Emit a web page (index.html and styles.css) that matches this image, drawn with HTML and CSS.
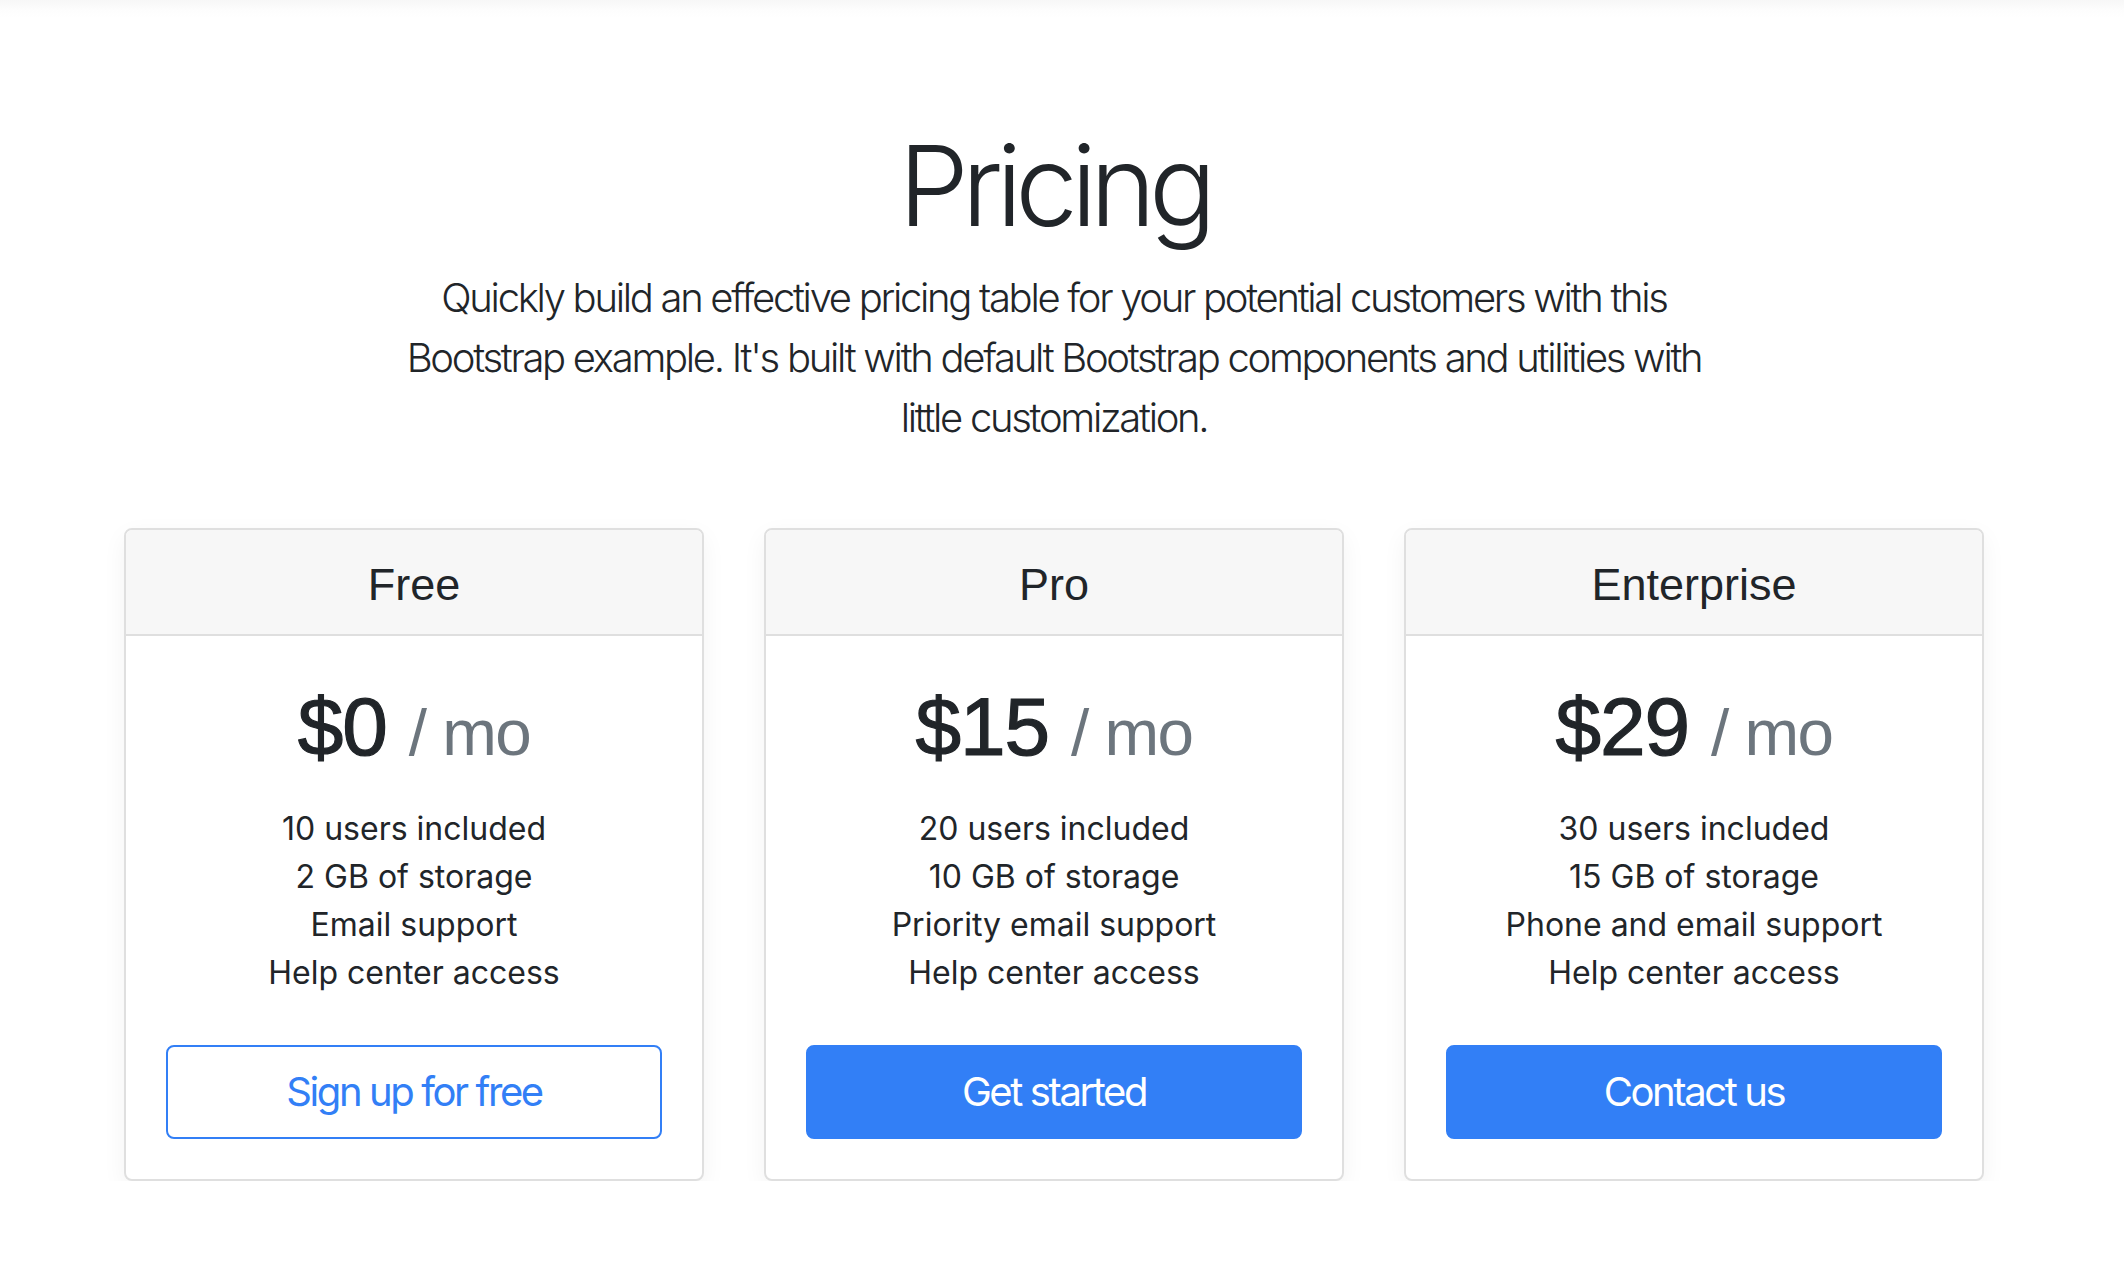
FILE: index.html
```html
<!DOCTYPE html>
<html lang="en">
<head>
<meta charset="utf-8">
<title>Pricing example</title>
<link rel="stylesheet" href="styles.css">
</head>
<body>
<div class="page">
  <header class="pricing-header">
    <h1 class="display">Pricing</h1>
    <p class="lead">Quickly build an effective pricing table for your potential customers with this Bootstrap example. It's built with default Bootstrap components and utilities with little customization.</p>
  </header>
  <main class="container">
    <div class="card-deck">
      <section class="card">
        <div class="card-header"><h4 class="plan-name">Free</h4></div>
        <div class="card-body">
          <h1 class="price">$0 <small class="muted">/ mo</small></h1>
          <ul class="features">
            <li>10 users included</li>
            <li>2 GB of storage</li>
            <li>Email support</li>
            <li>Help center access</li>
          </ul>
          <button type="button" class="btn btn-outline">Sign up for free</button>
        </div>
      </section>
      <section class="card">
        <div class="card-header"><h4 class="plan-name">Pro</h4></div>
        <div class="card-body">
          <h1 class="price">$15 <small class="muted">/ mo</small></h1>
          <ul class="features">
            <li>20 users included</li>
            <li>10 GB of storage</li>
            <li>Priority email support</li>
            <li>Help center access</li>
          </ul>
          <button type="button" class="btn btn-primary">Get started</button>
        </div>
      </section>
      <section class="card">
        <div class="card-header"><h4 class="plan-name">Enterprise</h4></div>
        <div class="card-body">
          <h1 class="price">$29 <small class="muted">/ mo</small></h1>
          <ul class="features">
            <li>30 users included</li>
            <li>15 GB of storage</li>
            <li>Phone and email support</li>
            <li>Help center access</li>
          </ul>
          <button type="button" class="btn btn-primary">Contact us</button>
        </div>
      </section>
    </div>
  </main>
</div>
</body>
</html>
```

FILE: styles.css
```css
html, body {
  margin: 0;
  padding: 0;
}

body {
  background: #fff linear-gradient(to bottom, #f7f7f7 0, #fdfdfd 10px, #fff 18px) no-repeat;
  color: #212529;
  font-family: Inter, "Noto Sans", sans-serif;
  font-size: 32px;
  line-height: 1.5;
}

.page {
  width: 2108px;
}

.pricing-header {
  max-width: 1336px;
  margin: 0 auto;
  padding: 118px 32px 48px;
  text-align: center;
}

.display {
  margin: 0 0 16px;
  font-size: 112px;
  font-weight: 300;
  line-height: 134.4px;
  letter-spacing: -7px;
}

.lead {
  margin: 0 0 32px;
  font-size: 40px;
  font-weight: 300;
  line-height: 60px;
  letter-spacing: -2.3px;
}

.container {
  width: 1920px;
  margin: 0 auto;
}

.card-deck {
  display: flex;
  gap: 60px;
  padding: 0 30px;
}

.card {
  flex: 1 1 0;
  display: flex;
  flex-direction: column;
  border: 2px solid #dfdfdf;
  border-radius: 8px;
  background: #fff;
  box-shadow: 0 8px 24px rgba(0, 0, 0, 0.05);
  text-align: center;
  overflow: hidden;
}

.card-header {
  padding: 26px 40px 20px;
  background: #f7f7f7;
  border-bottom: 2px solid #dfdfdf;
}

.plan-name {
  margin: 0;
  font-family: "Liberation Sans", Arial, sans-serif;
  font-size: 45px;
  font-weight: 400;
  line-height: 57.6px;
}

.card-body {
  padding: 43px 40px 40px;
}

.price {
  margin: 0;
  font-family: "Liberation Sans", Arial, sans-serif;
  font-size: 82px;
  font-weight: 400;
  line-height: 96px;
  letter-spacing: -1px;
  -webkit-text-stroke: 1.2px #212529;
}

.muted {
  font-size: 80%;
  font-weight: 400;
  letter-spacing: -1.5px;
  color: #6c757d;
  -webkit-text-stroke: 0;
}

.features {
  list-style: none;
  margin: 24px 0 48px;
  padding: 0;
  font-size: 32px;
  line-height: 48px;
}

.btn {
  display: block;
  width: 100%;
  box-sizing: border-box;
  padding: 15px 32px;
  border: 2px solid #327ff6;
  border-radius: 8px;
  font-family: Inter, "Noto Sans", sans-serif;
  font-size: 40px;
  font-weight: 400;
  line-height: 60px;
  letter-spacing: -2.4px;
  cursor: pointer;
}

.btn-outline {
  background: #fff;
  color: #327ff6;
}

.btn-primary {
  background: #327ff6;
  color: #fff;
}
```
